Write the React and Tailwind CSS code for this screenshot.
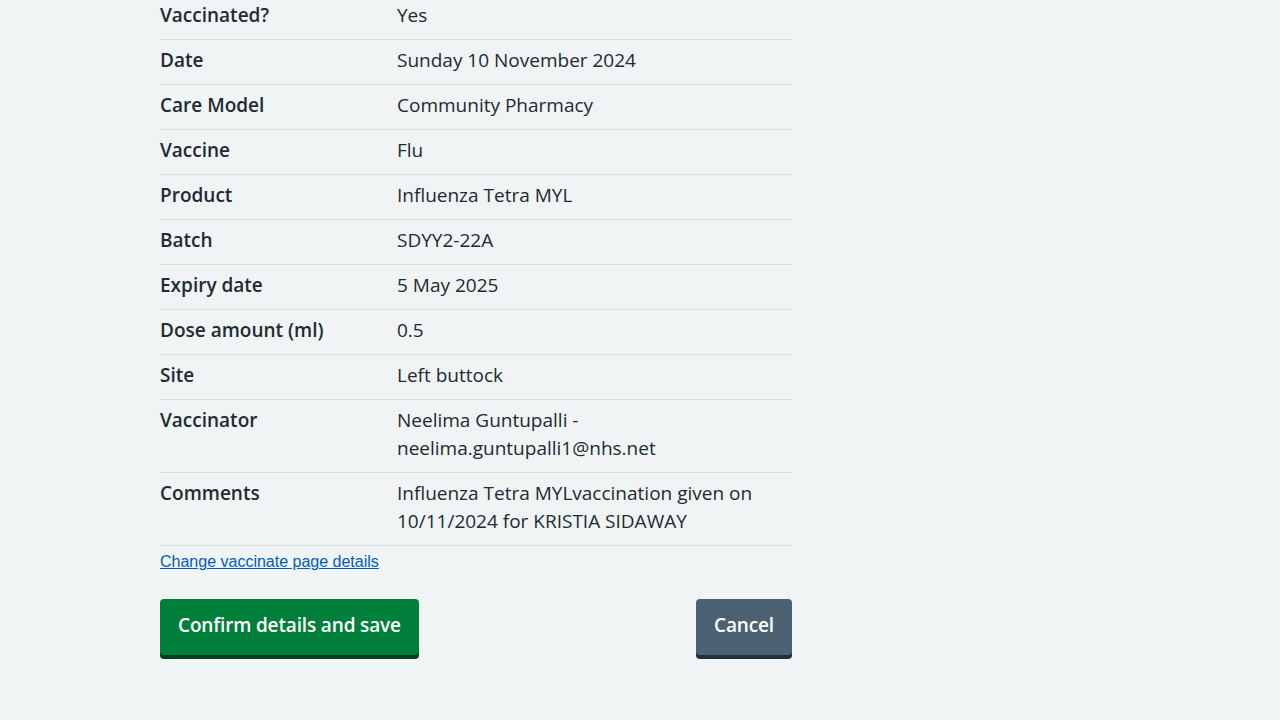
const rows = [
  ["Vaccinated?", "Yes"],
  ["Date", "Sunday 10 November 2024"],
  ["Care Model", "Community Pharmacy"],
  ["Vaccine", "Flu"],
  ["Product", "Influenza Tetra MYL"],
  ["Batch", "SDYY2-22A"],
  ["Expiry date", "5 May 2025"],
  ["Dose amount (ml)", "0.5"],
  ["Site", "Left buttock"],
  ["Vaccinator", "Neelima Guntupalli -\nneelima.guntupalli1@nhs.net"],
  ["Comments", "Influenza Tetra MYLvaccination given on 10/11/2024 for KRISTIA SIDAWAY"],
];

const App = () => {
  return (
    <div className="flow-root min-h-screen bg-[#f0f4f5] text-[#212b32] font-['Open_Sans',sans-serif]">
      <div className="w-[632px] ml-[160px] -mt-[5px]">
        <dl>
          {rows.map(([key, value]) => (
            <div key={key} className="flex border-b border-[#d8dde0] pt-[6px] pb-[10px] text-[19px] leading-7">
              <dt className="w-[237px] shrink-0 font-semibold">{key}</dt>
              <dd className="flex-1 whitespace-pre-line">{value}</dd>
            </div>
          ))}
        </dl>

        <a
          href="#"
          className="inline-block mt-[7px] font-['Liberation_Sans',Arial,sans-serif] text-base leading-[18px] text-[#005eb8] underline"
        >
          Change vaccinate page details
        </a>

        <div className="flex justify-between mt-[26px]">
          <button className="bg-[#007f3b] text-white font-semibold text-[19px] tracking-[-0.15px] leading-7 px-[18px] pt-[12px] pb-[16px] rounded-[4px] shadow-[0_4px_0_#00401e]">
            Confirm details and save
          </button>
          <button className="bg-[#4c6272] text-white font-semibold text-[19px] tracking-[-0.15px] leading-7 px-[18px] pt-[12px] pb-[16px] rounded-[4px] shadow-[0_4px_0_#263139]">
            Cancel
          </button>
        </div>
      </div>
    </div>
  );
};

export default App;
